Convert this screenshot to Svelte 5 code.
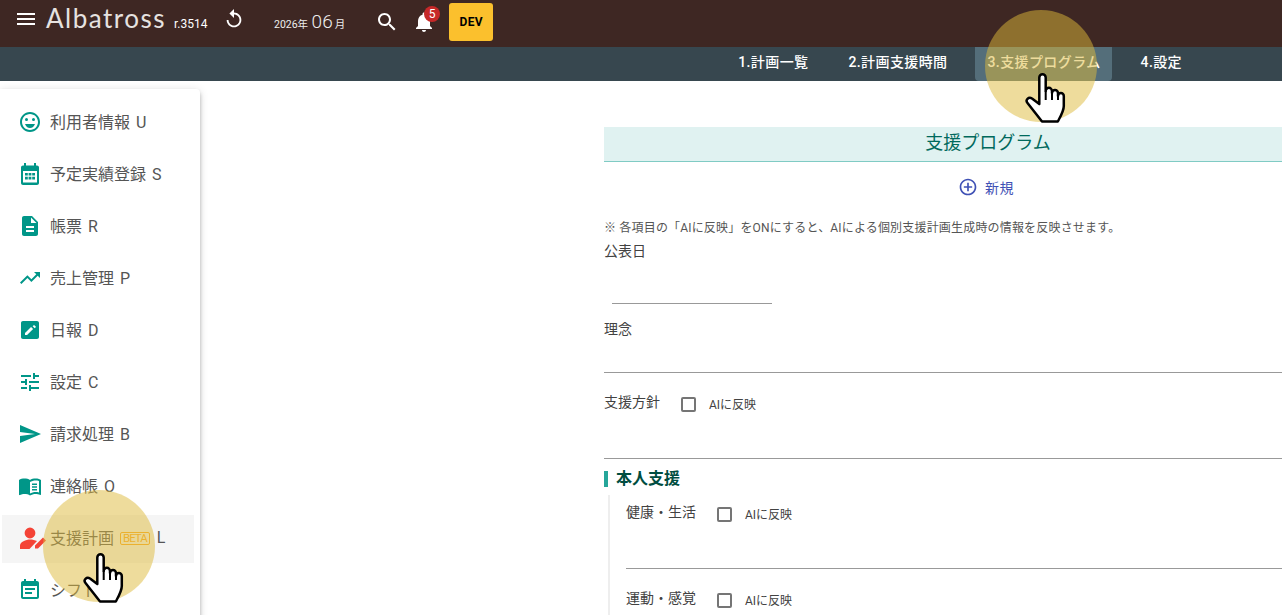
<script>
  const tabs = [
    { label: '1.計画一覧' },
    { label: '2.計画支援時間' },
    { label: '3.支援プログラム', active: true },
    { label: '4.設定' }
  ];

  const menu = [
    { label: '利用者情報 U', icon: 'smile' },
    { label: '予定実績登録 S', icon: 'calendar' },
    { label: '帳票 R', icon: 'doc' },
    { label: '売上管理 P', icon: 'trend' },
    { label: '日報 D', icon: 'edit' },
    { label: '設定 C', icon: 'tune' },
    { label: '請求処理 B', icon: 'send' },
    { label: '連絡帳 O', icon: 'book' },
    { label: '支援計画', icon: 'person', beta: true, active: true, key: 'L' },
    { label: 'シフト', icon: 'event' }
  ];

  const paths = {
    smile: 'M12 2C6.47 2 2 6.48 2 12s4.47 10 10 10 10-4.48 10-10S17.53 2 12 2zm0 18c-4.42 0-8-3.58-8-8s3.58-8 8-8 8 3.58 8 8-3.58 8-8 8zM7 14h10c-.78 2.34-2.72 4-5 4s-4.22-1.66-5-4zM8.5 8a1.5 1.5 0 1 1 0 3 1.5 1.5 0 0 1 0-3zM15.5 8a1.5 1.5 0 1 1 0 3 1.5 1.5 0 0 1 0-3z',
    calendar: 'M19 3.500h-1V1h-2v2.500H8V1H6v2.500H5c-1.100 0-2 .9-2 2V21c0 1.100.9 2 2 2h14c1.100 0 2-.9 2-2V5.500c0-1.100-.9-2-2-2zM19 20.500H5V9h14zM7 11h2.800v2.600H7zM10.600 11h2.800v2.600h-2.800zM14.200 11H17v2.600h-2.800zM7 14.800h2.800v2.600H7zM10.600 14.800h2.800v2.600h-2.800zM14.200 14.800H17v2.600h-2.800z',
    doc: 'M14 2H6c-1.1 0-1.99.9-1.99 2L4 20c0 1.1.89 2 1.99 2H18c1.1 0 2-.9 2-2V8l-6-6zm2 16H8v-2h8v2zm0-4H8v-2h8v2zm-3-5V3.5L18.5 9H13z',
    trend: 'M16 6l2.29 2.29-4.88 4.88-4-4L2 16.59 3.41 18l6-6 4 4 6.3-6.29L22 12V6z',
    edit: 'M19 3H5c-1.11 0-2 .9-2 2v14c0 1.1.89 2 2 2h14c1.1 0 2-.9 2-2V5c0-1.1-.9-2-2-2zM17.7 9.35l-1 1-2.05-2.05 1-1c.21-.22.56-.22.77 0l1.28 1.28c.22.21.22.56 0 .77zM7 14.95l6.06-6.06 2.05 2.05L9.05 17H7v-2.05z',
    tune: 'M3 17v2h6v-2H3zM3 5v2h10V5H3zm10 16v-2h8v-2h-8v-2h-2v6h2zM7 9v2H3v2h4v2h2V9H7zm14 4v-2H11v2h10zm-6-4h2V7h4V5h-4V3h-2v6z',
    send: 'M2.01 21L23 12 2.01 3 2 10l15 2-15 2z',
    book: 'M21 5c-1.11-.35-2.33-.5-3.5-.5-1.95 0-4.05.4-5.5 1.5-1.45-1.1-3.55-1.5-5.5-1.5S2.45 4.9 1 6v14.65c0 .25.25.5.5.5.1 0 .15-.05.25-.05C3.1 20.45 5.05 20 6.5 20c1.95 0 4.05.4 5.5 1.5 1.35-.85 3.8-1.5 5.5-1.5 1.65 0 3.35.3 4.75 1.05.1.05.15.05.25.05.25 0 .5-.25.5-.5V6c-.6-.45-1.25-.75-2-1zm0 13.5c-1.1-.35-2.3-.5-3.5-.5-1.7 0-4.15.65-5.5 1.5V8c1.35-.85 3.8-1.5 5.5-1.5 1.2 0 2.4.15 3.5.5v11.5zM14 9.5h5V11h-5zM14 12.2h5v1.5h-5zM14 14.9h5v1.5h-5z',
    person: 'M12 1.600a5.400 5.400 0 1 0 0 10.800 5.400 5.400 0 0 0 0-10.800zM2 23v-3.500c0-3.500 6-6 10-6 2.500 0 5 .6 7 1.500L11.500 23zM17 22.500v-3l8-8 3 3-8 8z',
    event: 'M17 10H7v2h10v-2zm2-7h-1V1h-2v2H8V1H6v2H5c-1.11 0-1.99.9-1.99 2L3 19c0 1.1.9 2 2 2h14c1.1 0 2-.9 2-2V5c0-1.1-.9-2-2-2zm0 16H5V8h14v11zm-5-5H7v2h7v-2z'
  };
</script>

{#snippet hand(cls)}
  <div class="spot {cls}">
    <svg class="pointer" viewBox="0 0 42 50" width="42" height="50">
      <path d="M14.300 30V4.500a3.200 3.200 0 0 1 6.400 0V18a3.150 3.150 0 0 1 6.300 0v2a3 3 0 0 1 6 0v3a2.900 2.900 0 0 1 5.800 0V33c0 5-2.500 9-6 15.500H17L2.500 30c-2.500-3 1-6.500 4.500-4.500L14.300 31z" fill="#fff" stroke="#000" stroke-width="2.500" stroke-linejoin="round" />
      <path d="M20.700 18v9M27 20v7M33 23v4" fill="none" stroke="#000" stroke-width="2" />
    </svg>
  </div>
{/snippet}

{#snippet check()}
  <label class="ai"><span class="box"></span><span class="ai-text">AIに反映</span></label>
{/snippet}

<div class="shell">
  <header class="top">
    <svg class="ico menu-btn" viewBox="0 0 24 24" width="24" height="24"><path d="M3 18h18v-2H3v2zm0-5h18v-2H3v2zm0-7v2h18V6H3z" /></svg>
    <span class="logo">Albatross</span>
    <span class="rev">r.3514</span>
    <svg class="ico reload" viewBox="0 0 24 24" width="22" height="22"><path d="M12 5V1L7 6l5 5V7c3.310 0 6 2.690 6 6s-2.690 6-6 6-6-2.690-6-6H4c0 4.420 3.580 8 8 8s8-3.580 8-8-3.580-8-8-8z" /></svg>
    <div class="date"><span>2026年</span><b>06</b><span>月</span></div>
    <svg class="ico search" viewBox="0 0 24 24" width="24" height="24"><path d="M15.500 14h-.79l-.28-.27C15.410 12.590 16 11.110 16 9.500 16 5.910 13.090 3 9.500 3S3 5.910 3 9.500 5.910 16 9.500 16c1.610 0 3.090-.59 4.230-1.570l.27.28v.79l5 4.990L20.490 19l-4.990-5zm-6 0C7.010 14 5 11.990 5 9.500S7.010 5 9.500 5 14 7.010 14 9.500 11.990 14 9.500 14z" /></svg>
    <div class="bell">
      <svg class="ico" viewBox="0 0 24 24" width="24" height="24"><path d="M12 22c1.100 0 2-.9 2-2h-4c0 1.100.89 2 2 2zm6-6v-5c0-3.070-1.640-5.640-4.500-6.320V4c0-.83-.67-1.500-1.500-1.500s-1.500.67-1.500 1.500v.68C7.630 5.360 6 7.920 6 11v5l-2 2v1h16v-1l-2-2z" /></svg>
      <span class="badge">5</span>
    </div>
    <button class="dev">DEV</button>
  </header>

  <nav class="tabs">
    {#each tabs as tab}
      <a class="tab" class:active={tab.active}>{tab.label}</a>
    {/each}
  </nav>

  <div class="body">
    <aside class="side">
      {#each menu as item}
        <div class="item" class:active={item.active}>
          <svg class="mi" class:red={item.icon === 'person'} viewBox="0 0 24 24" width="24" height="24"><path d={paths[item.icon]} fill-rule="evenodd" /></svg>
          <span class="txt">{item.label}</span>
          {#if item.beta}<span class="beta">BETA</span>{/if}
          {#if item.key}<span class="txt key">{item.key}</span>{/if}
        </div>
      {/each}
    </aside>

    <main class="main">
      <h1 class="title">支援プログラム</h1>
      <div class="new">
        <svg viewBox="0 0 24 24" width="20" height="20"><path d="M13 7h-2v4H7v2h4v4h2v-4h4v-2h-4V7zm-1-5C6.480 2 2 6.480 2 12s4.480 10 10 10 10-4.480 10-10S17.520 2 12 2zm0 18c-4.410 0-8-3.590-8-8s3.590-8 8-8 8 3.590 8 8-3.590 8-8 8z" /></svg>
        <span>新規</span>
      </div>
      <p class="note">※ 各項目の「AIに反映」をONにすると、AIによる個別支援計画生成時の情報を反映させます。</p>
      <div class="lbl">公表日</div>
      <div class="date-input"></div>

      <div class="lbl gap15">理念</div>
      <div class="area short"></div>

      <div class="lbl row">支援方針 {@render check()}</div>
      <div class="area"></div>

      <h2 class="sec">本人支援</h2>
      <div class="group">
        <div class="lbl row first">健康・生活 {@render check()}</div>
        <div class="area"></div>
        <div class="lbl row">運動・感覚 {@render check()}</div>
        <div class="area"></div>
      </div>
    </main>
  </div>

  {@render hand('spot-tab')}
  {@render hand('spot-menu')}
</div>

<style>
  :global(body) {
    margin: 0;
    background: #fff;
    font-family: Roboto, 'Noto Sans CJK JP', sans-serif;
  }

  .shell {
    position: relative;
    height: 615px;
    overflow: hidden;
  }

  .top {
    display: flex;
    align-items: center;
    height: 47px;
    background: #3e2723;
    color: #fff;
  }

  .ico {
    fill: #fff;
    flex: none;
    display: block;
  }

  .menu-btn {
    margin: -9px 0 0 14px;
  }

  .logo {
    margin: -11px 0 0 8px;
    font-family: Lato, sans-serif;
    font-weight: 400;
    font-size: 26px;
    letter-spacing: 1.5px;
    color: #e6e2e0;
    width: 128px;
  }

  .rev {
    font-size: 12px;
    width: 35px;
  }

  .reload {
    margin: -9px 0 0 14px;
  }

  .date {
    display: flex;
    flex: none;
    align-items: baseline;
    gap: 3.5px;
    margin: -4px 0 0 29px;
    font-size: 10.5px;
    white-space: nowrap;
    color: #eee;
  }

  .date b {
    margin-right: -1.5px;
    font-size: 19px;
    font-weight: 300;
  }

  .search {
    margin: -4px 0 0 30px;
  }

  .bell {
    position: relative;
    margin: -4px 0 0 13px;
  }

  .badge {
    position: absolute;
    top: -4px;
    left: 12px;
    width: 16px;
    height: 16px;
    border-radius: 50%;
    background: #c62828;
    font-size: 12px;
    line-height: 16px;
    text-align: center;
  }

  .dev {
    width: 44px;
    height: 38px;
    margin: -3px 0 0 13px;
    padding: 0;
    border: 0;
    border-radius: 3px;
    background: #fbc02d;
    color: #000;
    font: 700 12px Roboto, sans-serif;
    letter-spacing: 0.3px;
  }

  .tabs {
    display: flex;
    justify-content: flex-end;
    gap: 16px;
    height: 34px;
    padding-right: 89px;
    background: #37474f;
  }

  .tab {
    padding: 0 11px 0 13px;
    font-size: 14px;
    font-weight: 500;
    letter-spacing: 0.4px;
    line-height: 30px;
    color: #fff;
    border-radius: 0 0 4px 4px;
  }

  .tab.active {
    background: #546e7a;
  }

  .body {
    display: grid;
    grid-template-columns: 200px 404px 768px;
  }

  .side {
    grid-column: 1;
    margin-top: 8px;
    padding-top: 10px;
    height: 560px;
    box-sizing: border-box;
    background: #fff;
    border-radius: 0 4px 4px 0;
    box-shadow: 0 2px 4px -1px rgba(0, 0, 0, 0.2), 0 4px 5px rgba(0, 0, 0, 0.14), 0 1px 10px rgba(0, 0, 0, 0.12);
  }

  .item {
    display: flex;
    align-items: center;
    gap: 8px;
    height: 48px;
    margin: 0 6px 4px 2px;
    padding: 0 0 2px 16px;
    box-sizing: border-box;
    font-size: 16px;
    color: #555;
  }

  .item.active {
    background: #f5f5f5;
  }

  .txt {
    margin-bottom: 2px;
    word-spacing: 2px;
  }

  .mi {
    flex: none;
    fill: #009688;
    overflow: visible;
  }

  .mi.red {
    fill: #f44336;
  }

  .beta {
    margin-left: -2px;
    padding: 0 2px;
    border: 1px solid #f9a825;
    border-radius: 2px;
    font-size: 11.5px;
    line-height: 11px;
    letter-spacing: -1px;
    color: #f9a825;
  }

  .key {
    margin-left: -1px;
  }

  .main {
    grid-column: 3;
    padding-top: 46px;
    font-size: 14px;
    color: #424242;
  }

  .title {
    margin: 0;
    height: 34px;
    border-bottom: 1px solid #80cbc4;
    background: #e0f2f1;
    font-size: 18px;
    font-weight: 400;
    line-height: 31px;
    text-align: center;
    color: #00695c;
  }

  .new {
    display: flex;
    align-items: center;
    justify-content: center;
    gap: 7px;
    height: 52px;
    padding-bottom: 3px;
    box-sizing: border-box;
    margin-left: -4px;
    font-size: 14px;
    letter-spacing: 0.5px;
    color: #3f51b5;
  }

  .new svg {
    fill: #3f51b5;
  }

  .note {
    margin: 4px 0 3px;
    font-size: 12px;
    letter-spacing: 0.18px;
    line-height: 20px;
    color: #555;
  }

  .lbl {
    height: 20px;
    line-height: 20px;
  }

  .gap15 {
    margin-top: 15px;
  }

  .date-input {
    width: 160px;
    height: 42px;
    margin-left: 8px;
    border-bottom: 1px solid #999;
  }

  .area {
    height: 46px;
    border-bottom: 1px solid #999;
  }

  .area.short {
    height: 33px;
  }

  .row {
    display: flex;
    align-items: center;
    gap: 21px;
    margin-top: 19px;
  }

  .row.first {
    margin-top: 0;
  }

  .ai {
    display: flex;
    align-items: center;
    gap: 13px;
    margin-top: 4px;
    font-size: 12px;
  }

  .ai-text {
    margin-top: 2px;
  }

  .box {
    width: 11px;
    height: 11px;
    border: 2px solid #757575;
    border-radius: 2px;
  }

  .sec {
    margin: 12px 0 0;
    height: 16px;
    padding-left: 8px;
    border-left: 4px solid #26a69a;
    font-size: 16px;
    font-weight: 700;
    line-height: 15px;
    color: #004d40;
  }

  .group {
    margin: 8px 0 0 4px;
    padding: 7px 0 0 16px;
    border-left: 2px solid #eee;
  }

  .spot {
    position: absolute;
    width: 112px;
    height: 112px;
    border-radius: 50%;
    background: rgba(221, 185, 57, 0.5);
  }

  .spot-tab {
    left: 985px;
    top: 10px;
  }

  .spot-menu {
    left: 43px;
    top: 490px;
  }

  .pointer {
    position: absolute;
    left: 40px;
    top: 63px;
  }
</style>
